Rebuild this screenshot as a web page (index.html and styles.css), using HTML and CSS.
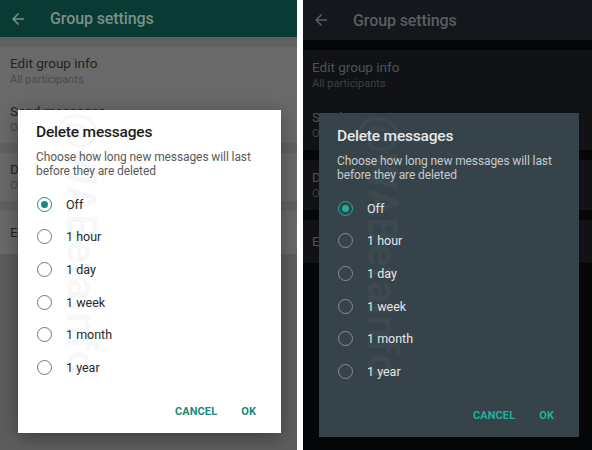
FILE: index.html
```html
<!DOCTYPE html>
<html lang="en">
<head>
<meta charset="utf-8">
<title>Group settings – Delete messages</title>
<link rel="stylesheet" href="styles.css">
</head>
<body>
<div class="screens">
  <section class="phone phone--light">
    <header class="appbar">
      <svg class="appbar__back" viewBox="0 0 24 24" width="18" height="18"><path d="M20 11H7.83l5.59-5.59L12 4l-8 8 8 8 1.41-1.41L7.83 13H20v-2z"/></svg>
      <h1 class="appbar__title">Group settings</h1>
    </header>
    <div class="settings">
      <div class="band"></div>
      <div class="group">
        <div class="row"><div class="row__title">Edit group info</div><div class="row__sub">All participants</div></div>
        <div class="row"><div class="row__title">Send messages</div><div class="row__sub">Only admins</div></div>
      </div>
      <div class="band"></div>
      <div class="group">
        <div class="row"><div class="row__title">Delete messages</div><div class="row__sub">Off</div></div>
      </div>
      <div class="band"></div>
      <div class="group">
        <div class="row row--single"><div class="row__title">Edit group admins</div></div>
      </div>
    </div>
    <div class="dialog">
      <div class="watermark">@WABetaInfo</div>
      <h2 class="dialog__title">Delete messages</h2>
      <p class="dialog__text">Choose how long new messages will last before they are deleted</p>
      <ul class="options">
        <li class="option option--checked"><span class="radio"></span><span class="option__label">Off</span></li>
        <li class="option"><span class="radio"></span><span class="option__label">1 hour</span></li>
        <li class="option"><span class="radio"></span><span class="option__label">1 day</span></li>
        <li class="option"><span class="radio"></span><span class="option__label">1 week</span></li>
        <li class="option"><span class="radio"></span><span class="option__label">1 month</span></li>
        <li class="option"><span class="radio"></span><span class="option__label">1 year</span></li>
      </ul>
      <div class="actions">
        <span class="btn">CANCEL</span>
        <span class="btn">OK</span>
      </div>
    </div>
  </section>

  <section class="phone phone--dark">
    <header class="appbar">
      <svg class="appbar__back" viewBox="0 0 24 24" width="18" height="18"><path d="M20 11H7.83l5.59-5.59L12 4l-8 8 8 8 1.41-1.41L7.83 13H20v-2z"/></svg>
      <h1 class="appbar__title">Group settings</h1>
    </header>
    <div class="settings">
      <div class="band"></div>
      <div class="group">
        <div class="row"><div class="row__title">Edit group info</div><div class="row__sub">All participants</div></div>
        <div class="row"><div class="row__title">Send messages</div><div class="row__sub">Only admins</div></div>
      </div>
      <div class="band"></div>
      <div class="group">
        <div class="row"><div class="row__title">Delete messages</div><div class="row__sub">Off</div></div>
      </div>
      <div class="band"></div>
      <div class="group">
        <div class="row row--single"><div class="row__title">Edit group admins</div></div>
      </div>
    </div>
    <div class="dialog">
      <div class="watermark">@WABetaInfo</div>
      <h2 class="dialog__title">Delete messages</h2>
      <p class="dialog__text">Choose how long new messages will last before they are deleted</p>
      <ul class="options">
        <li class="option option--checked"><span class="radio"></span><span class="option__label">Off</span></li>
        <li class="option"><span class="radio"></span><span class="option__label">1 hour</span></li>
        <li class="option"><span class="radio"></span><span class="option__label">1 day</span></li>
        <li class="option"><span class="radio"></span><span class="option__label">1 week</span></li>
        <li class="option"><span class="radio"></span><span class="option__label">1 month</span></li>
        <li class="option"><span class="radio"></span><span class="option__label">1 year</span></li>
      </ul>
      <div class="actions">
        <span class="btn">CANCEL</span>
        <span class="btn">OK</span>
      </div>
    </div>
  </section>
</div>
</body>
</html>
```

FILE: styles.css
```css
* { box-sizing: border-box; }

html, body {
  margin: 0;
  padding: 0;
  background: #ffffff;
}

body {
  width: 592px;
  height: 450px;
  overflow: hidden;
  font-family: Roboto, "Noto Sans", "Liberation Sans", sans-serif;
}

.screens {
  display: flex;
  gap: 6px;
  height: 450px;
}

.phone {
  position: relative;
  height: 450px;
  overflow: hidden;
}

.phone--light {
  width: 297px;
  background: #5d5d5d;
  --bar-bg: #093a33;
  --bar-fg: #7c8f8b;
  --bar-h: 37px;
  --band: #616161;
  --row-bg: #696969;
  --row-pad: 8px;
  --row-title: #242424;
  --row-sub: #4a4a4a;
  --dlg-bg: #ffffff;
  --dlg-title: #1e1e1e;
  --dlg-text: #5a5a5a;
  --dlg-label: #2a2a2a;
  --ring: #757575;
  --accent: #168a7b;
  --wm: rgba(0, 0, 0, 0.035);
}

.phone--dark {
  flex: 1;
  background: #050607;
  --bar-bg: #14171b;
  --bar-fg: #5a5e62;
  --bar-h: 40px;
  --band: #050607;
  --row-bg: #101216;
  --row-pad: 9px;
  --row-title: #4e5256;
  --row-sub: #3c4044;
  --dlg-bg: #37434a;
  --dlg-title: #e6e8e9;
  --dlg-text: #c6cacd;
  --dlg-label: #e4e6e7;
  --ring: #878c8f;
  --accent: #1fb09b;
  --wm: rgba(255, 255, 255, 0.035);
}

/* App bar */
.appbar {
  height: var(--bar-h);
  background: var(--bar-bg);
  display: flex;
  align-items: center;
  padding-left: 9px;
}

.appbar__back {
  fill: var(--bar-fg);
  flex: none;
}

.appbar__title {
  margin: 0 0 0 23px;
  font-size: 16px;
  font-weight: 500;
  color: var(--bar-fg);
  letter-spacing: -0.1px;
}

/* Settings list */
.band {
  height: 10px;
  background: var(--band);
}

.group {
  background: var(--row-bg);
}

.row {
  padding: var(--row-pad) 10px;
}

.phone--dark .row { padding-left: 9px; }

.row--single {
  padding-top: 13px;
  padding-bottom: 13px;
}

.row__title {
  font-size: 13.5px;
  line-height: 17px;
  color: var(--row-title);
}

.row__sub {
  font-size: 11px;
  line-height: 15px;
  color: var(--row-sub);
}

/* Dialog (overlay) */
.dialog {
  position: absolute;
  top: 110px;
  left: 18px;
  width: 263px;
  height: 323px;
  background: var(--dlg-bg);
  padding: 12px 17px 4px 18px;
  box-shadow: 0 4px 18px rgba(0, 0, 0, 0.35);
  overflow: hidden;
}

.phone--dark .dialog {
  top: 113px;
  left: 16px;
  width: 260px;
  height: 324px;
  padding-top: 13px;
  box-shadow: none;
}

.watermark {
  position: absolute;
  left: 87px;
  top: 2px;
  transform-origin: 0 0;
  transform: rotate(90deg);
  font-size: 42px;
  line-height: 48px;
  font-weight: 700;
  white-space: nowrap;
  color: var(--wm);
  pointer-events: none;
}

.dialog__title {
  position: relative;
  margin: 0;
  font-size: 15.5px;
  line-height: 20px;
  font-weight: 500;
  letter-spacing: -0.2px;
  color: var(--dlg-title);
}

.dialog__text {
  position: relative;
  margin: 8px 0 0;
  font-size: 12px;
  line-height: 14px;
  color: var(--dlg-text);
  letter-spacing: -0.1px;
  padding-right: 8px;
}

.options {
  position: relative;
  list-style: none;
  margin: 10px 0 0;
  padding: 0;
}

.option {
  height: 32.6px;
  display: flex;
  align-items: center;
  padding-left: 0.5px;
}

.radio {
  width: 15px;
  height: 15px;
  border: 1.8px solid var(--ring);
  border-radius: 50%;
  flex: none;
  display: flex;
  align-items: center;
  justify-content: center;
}

.option--checked .radio {
  border-color: var(--accent);
}

.option--checked .radio::after {
  content: "";
  width: 7px;
  height: 7px;
  border-radius: 50%;
  background: var(--accent);
}

.option__label {
  margin-left: 14.5px;
  font-size: 12.5px;
  color: var(--dlg-label);
}

.actions {
  position: relative;
  margin-top: 10px;
  height: 36px;
  display: flex;
  justify-content: flex-end;
  align-items: center;
  gap: 8px;
}

.btn {
  padding: 0 8px;
  font-size: 11px;
  font-weight: 700;
  color: var(--accent);
  letter-spacing: 0.1px;
}
```
